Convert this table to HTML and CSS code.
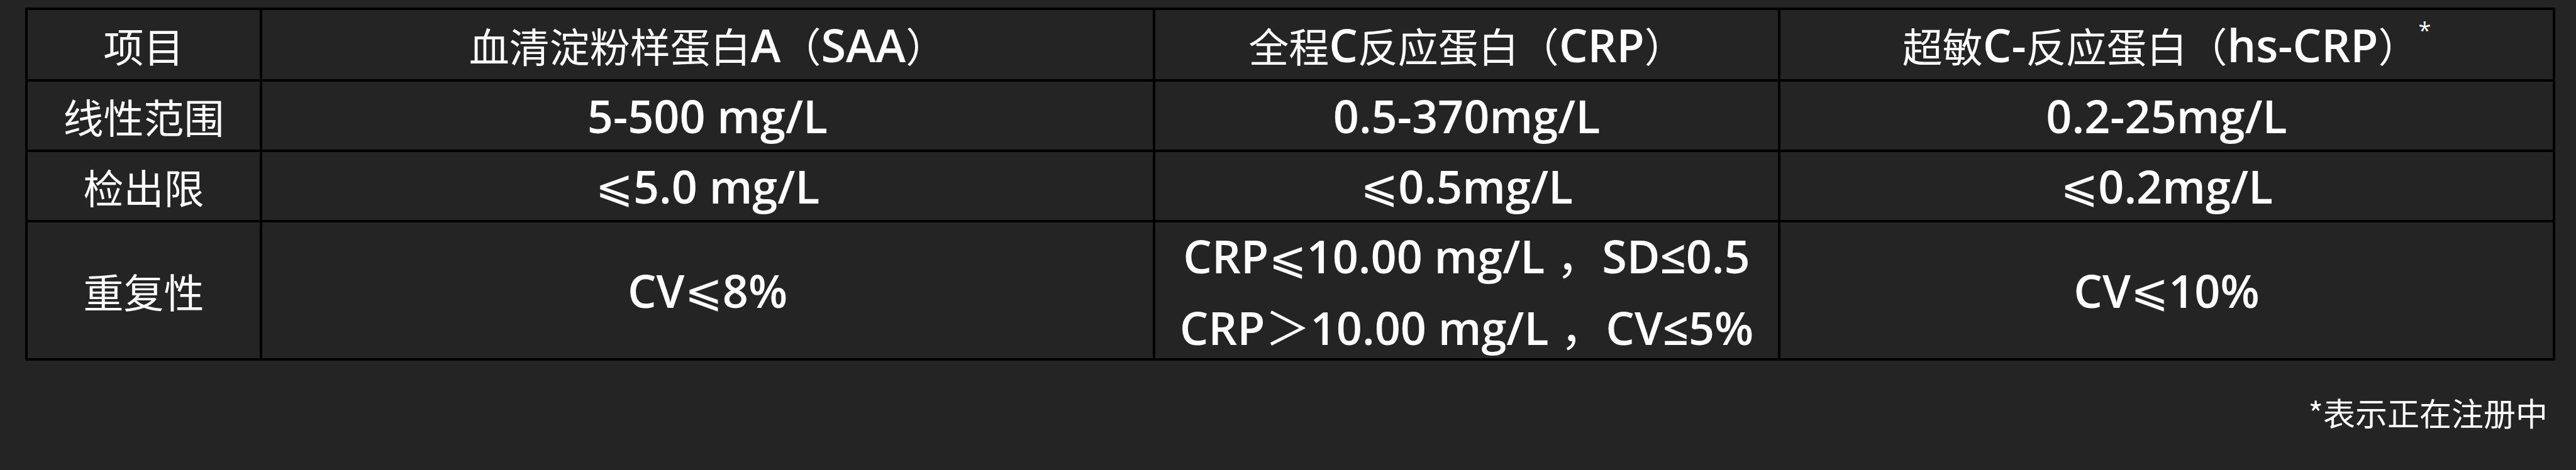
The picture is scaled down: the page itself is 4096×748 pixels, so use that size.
FILE: index.html
```html
<!DOCTYPE html>
<html lang="zh-CN">
<head>
<meta charset="utf-8">
<title>检测性能参数</title>
<link rel="stylesheet" href="styles.css">
</head>
<body>
<main class="page">
  <div class="spec-table">
    <div class="cell label">项目</div>
    <div class="cell label">血清淀粉样蛋白<span class="en">A</span>（<span class="en">SAA</span>）</div>
    <div class="cell label">全程<span class="en">C</span>反应蛋白（<span class="en">CRP</span>）</div>
    <div class="cell label">超敏<span class="en">C-</span>反应蛋白（<span class="en">hs-CRP</span>）<sup class="mark">*</sup></div>

    <div class="cell label">线性范围</div>
    <div class="cell value">5-500 mg/L</div>
    <div class="cell value">0.5-370mg/L</div>
    <div class="cell value">0.2-25mg/L</div>

    <div class="cell label">检出限</div>
    <div class="cell value"><span class="le">⩽</span>5.0 mg/L</div>
    <div class="cell value"><span class="le">⩽</span>0.5mg/L</div>
    <div class="cell value"><span class="le">⩽</span>0.2mg/L</div>

    <div class="cell label">重复性</div>
    <div class="cell value">CV<span class="le">⩽</span>8%</div>
    <div class="cell value multi">
      <span class="line">CRP<span class="le">⩽</span>10.00 mg/L <span class="cjk">，</span>SD≤0.5</span>
      <span class="line">CRP<span class="cjk">＞</span>10.00 mg/L <span class="cjk">，</span>CV≤5%</span>
    </div>
    <div class="cell value">CV<span class="le">⩽</span>10%</div>
  </div>
  <p class="note">*表示正在注册中</p>
</main>
</body>
</html>
```

FILE: styles.css
```css
html, body {
  margin: 0;
  padding: 0;
  background: #242424;
}

body {
  width: 4096px;
  height: 748px;
  overflow: hidden;
  color: #ffffff;
  font-family: "Noto Sans CJK SC", sans-serif;
}

.page {
  padding: 12px 0 0 40px;
}

.spec-table {
  display: grid;
  grid-template-columns: 369px 1416px 990px 1228px;
  grid-template-rows: 110px 108px 108px 216px;
  gap: 4px;
  padding: 4px;
  background: #000000;
  width: max-content;
}

.cell {
  background: #242424;
  display: flex;
  align-items: center;
  justify-content: center;
  text-align: center;
  white-space: nowrap;
  line-height: 1;
}

.label {
  font-size: 64px;
}

.en {
  font-family: "Open Sans", "DejaVu Sans", sans-serif;
  font-size: 72px;
  font-weight: 600;
}

.value {
  font-family: "Open Sans", "DejaVu Sans", "Noto Sans CJK SC", sans-serif;
  font-size: 72px;
  font-weight: 600;
}

.le {
  font-family: "DejaVu Sans", sans-serif;
  font-weight: 400;
}

.cjk {
  font-family: "Noto Sans CJK SC", sans-serif;
  font-weight: 400;
}

.mark {
  font-family: "Open Sans", sans-serif;
  font-size: 36px;
  align-self: flex-start;
  margin-top: 14px;
  line-height: 1;
}

.multi {
  flex-direction: column;
}

.line {
  display: block;
  line-height: 108px;
}

.note {
  margin: 52px 45px 0 0;
  text-align: right;
  font-size: 51px;
  line-height: 61px;
}
```
